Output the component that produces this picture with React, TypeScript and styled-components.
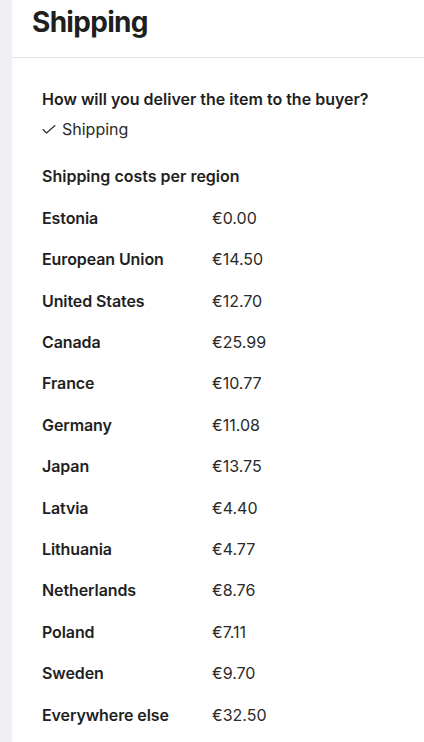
import styled, { createGlobalStyle } from 'styled-components'

const GlobalStyle = createGlobalStyle`
  html, body {
    margin: 0;
    padding: 0;
    background: #eff0f4;
  }
  body {
    font-family: Inter, "Noto Sans", sans-serif;
    color: #1f1f1f;
  }
`

const Page = styled.div`
  display: flex;
  min-height: 742px;
  padding-left: 12px;
`

const Panel = styled.main`
  flex: 1;
  background: #ffffff;
`

const Header = styled.header`
  height: 58px;
  box-sizing: border-box;
  padding: 0 20px;
  border-bottom: 1px solid #e4e4e7;
  display: flex;
  align-items: flex-start;
`

const Title = styled.h1`
  margin: 0;
  font-size: 28px;
  font-weight: 700;
  letter-spacing: -0.7px;
  line-height: 45px;
`

const Body = styled.section`
  padding: 29px 30px 0;
`

const Question = styled.h2`
  margin: 0;
  font-size: 16px;
  font-weight: 600;
  line-height: 24px;
`

const Answer = styled.div`
  display: flex;
  align-items: center;
  gap: 6px;
  margin-top: 6px;
  font-size: 16px;
  line-height: 24px;
  color: #2a2a2a;
`

const SubHeading = styled.h3`
  margin: 23px 0 9px;
  font-size: 16px;
  font-weight: 600;
  line-height: 24px;
`

const Table = styled.div`
  display: grid;
  grid-template-columns: 170px 1fr;
  grid-auto-rows: 41.42px;
  align-items: center;
  font-size: 16px;
`

const Region = styled.span`
  font-weight: 600;
  letter-spacing: -0.1px;
`

const Price = styled.span`
  color: #2a2a2a;
`

const rates: [string, string][] = [
  ['Estonia', '€0.00'],
  ['European Union', '€14.50'],
  ['United States', '€12.70'],
  ['Canada', '€25.99'],
  ['France', '€10.77'],
  ['Germany', '€11.08'],
  ['Japan', '€13.75'],
  ['Latvia', '€4.40'],
  ['Lithuania', '€4.77'],
  ['Netherlands', '€8.76'],
  ['Poland', '€7.11'],
  ['Sweden', '€9.70'],
  ['Everywhere else', '€32.50'],
]

const Check = () => (
  <svg width="14" height="14" viewBox="0 0 14 14" fill="none">
    <polyline points="1,7.5 4.5,11 13,3.5" stroke="#2a2a2a" strokeWidth="1.1" strokeLinecap="round" strokeLinejoin="round" />
  </svg>
)

export default function App() {
  return (
    <>
      <GlobalStyle />
      <Page>
        <Panel>
          <Header>
            <Title>Shipping</Title>
          </Header>
          <Body>
            <Question>How will you deliver the item to the buyer?</Question>
            <Answer>
              <Check />
              Shipping
            </Answer>
            <SubHeading>Shipping costs per region</SubHeading>
            <Table>
              {rates.map(([region, price]) => (
                <>
                  <Region key={region}>{region}</Region>
                  <Price key={region + '-p'}>{price}</Price>
                </>
              ))}
            </Table>
          </Body>
        </Panel>
      </Page>
    </>
  )
}
